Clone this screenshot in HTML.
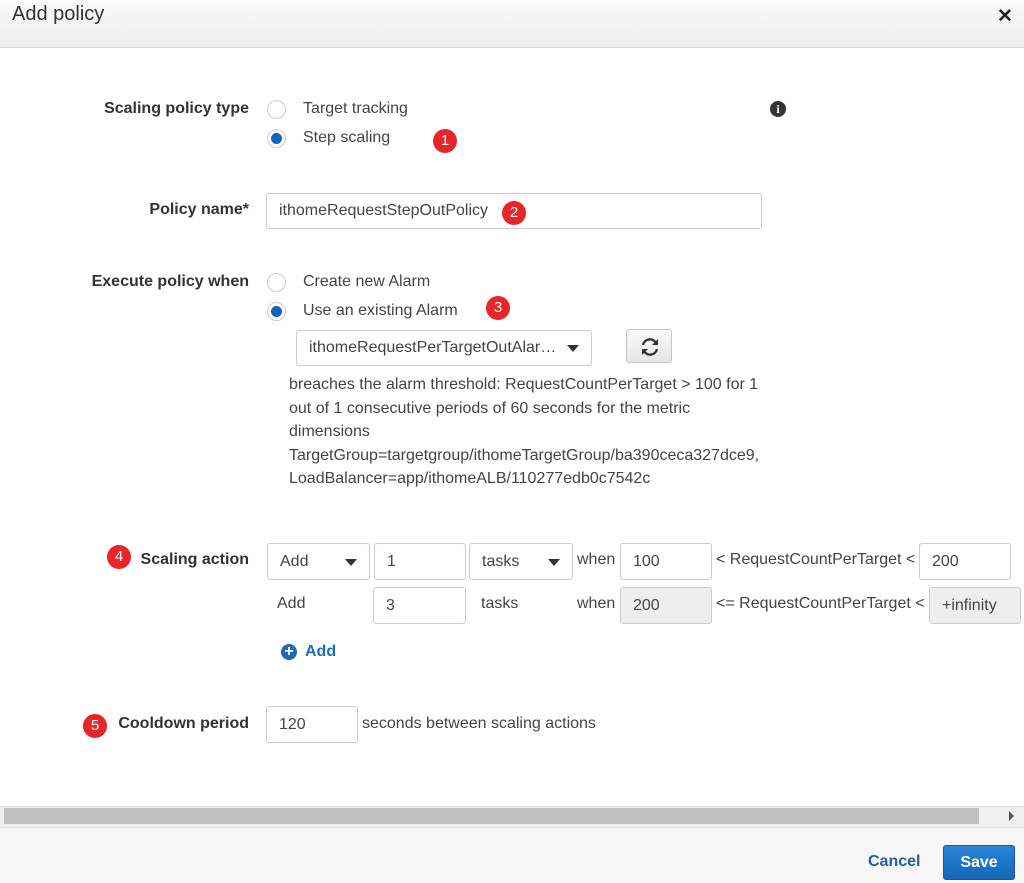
<!DOCTYPE html>
<html><head><meta charset="utf-8"><style>
*{box-sizing:border-box;margin:0;padding:0}
body{width:1024px;height:883px;position:relative;background:#fff;font-family:"Liberation Sans",Arial,sans-serif;color:#444;font-size:16px;overflow:hidden}
.a{position:absolute;white-space:nowrap}
.hdr{position:absolute;left:0;top:0;width:1024px;height:48px;background:linear-gradient(#fafafa,#ededed);border-bottom:1px solid #d6d6d6}
.lbl{position:absolute;right:775px;font-weight:bold;color:#333;font-size:16px;white-space:nowrap}
.rad{position:absolute;width:19px;height:19px;border-radius:50%;border:1px solid #ccc;background:#fff}
.rad.on::after{content:"";position:absolute;left:3px;top:3px;width:11px;height:11px;border-radius:50%;background:#1166bb}
.in{position:absolute;border:1px solid #ccc;border-radius:3px;background:#fff;padding-left:12px;display:flex;align-items:center;font-size:16px;color:#444}
.in.dis{background:#eee}
.car{position:absolute;right:12px;top:50%;margin-top:-3px;width:0;height:0;border-left:6px solid transparent;border-right:6px solid transparent;border-top:7px solid #333}
.b{position:absolute;width:24px;height:24px;border-radius:50%;background:#e8262a;color:#fff;font-size:15px;text-align:center;line-height:24px}
</style></head><body>
<div class="hdr"></div>
<div class="a" style="left:12px;top:3px;font-size:20px;color:#333">Add policy</div>
<div class="a" style="left:997px;top:5px;font-size:19px;font-weight:bold;color:#222">✕</div>

<div class="lbl" style="top:100px">Scaling policy type</div>
<div class="rad" style="left:267px;top:100px"></div>
<div class="a" style="left:303px;top:100px">Target tracking</div>
<div class="rad on" style="left:267px;top:129px"></div>
<div class="a" style="left:303px;top:129px">Step scaling</div>
<div class="b" style="left:433px;top:129px">1</div>
<div class="a" style="left:770px;top:101px;width:16px;height:16px;border-radius:50%;background:#333;color:#fff;font-size:12px;font-weight:bold;text-align:center;line-height:16px;font-family:'Liberation Serif',serif">i</div>

<div class="lbl" style="top:201px">Policy name*</div>
<div class="in" style="left:266px;top:193px;width:496px;height:36px">ithomeRequestStepOutPolicy</div>
<div class="b" style="left:502px;top:201px">2</div>

<div class="lbl" style="top:273px">Execute policy when</div>
<div class="rad" style="left:267px;top:273px"></div>
<div class="a" style="left:303px;top:273px">Create new Alarm</div>
<div class="rad on" style="left:267px;top:302px"></div>
<div class="a" style="left:303px;top:302px">Use an existing Alarm</div>
<div class="b" style="left:486px;top:296px">3</div>
<div class="in" style="left:296px;top:330px;width:296px;height:36px">ithomeRequestPerTargetOutAlar…<span class="car"></span></div>
<div class="a" style="left:626px;top:329px;width:46px;height:34px;border:1px solid #c6c6c6;border-radius:3px;background:linear-gradient(#fafafa,#e6e6e6)">
<svg width="46" height="34" viewBox="0 0 46 34"><g fill="none" stroke="#333" stroke-width="2.4"><path d="M16 15a7 7 0 0 1 13-2"/><path d="M30 19a7 7 0 0 1-13 2"/></g><path d="M31 9v6h-6z M15 25v-6h6z" fill="#333"/></svg></div>
<div class="a" style="left:289px;top:373px;line-height:23.5px;white-space:normal;width:500px">breaches the alarm threshold: RequestCountPerTarget &gt; 100 for 1<br>out of 1 consecutive periods of 60 seconds for the metric<br>dimensions<br>TargetGroup=targetgroup/ithomeTargetGroup/ba390ceca327dce9,<br>LoadBalancer=app/ithomeALB/110277edb0c7542c</div>

<div class="b" style="left:107px;top:545px">4</div>
<div class="lbl" style="top:551px">Scaling action</div>
<div class="in" style="left:267px;top:543px;width:103px;height:37px">Add<span class="car"></span></div>
<div class="in" style="left:374px;top:543px;width:92px;height:37px">1</div>
<div class="in" style="left:469px;top:543px;width:104px;height:37px">tasks<span class="car"></span></div>
<div class="a" style="left:577px;top:551px">when</div>
<div class="in" style="left:620px;top:543px;width:92px;height:37px">100</div>
<div class="a" style="left:716px;top:551px">&lt; RequestCountPerTarget &lt;</div>
<div class="in" style="left:919px;top:543px;width:92px;height:37px">200</div>

<div class="a" style="left:277px;top:595px">Add</div>
<div class="in" style="left:373px;top:587px;width:93px;height:37px">3</div>
<div class="a" style="left:481px;top:595px">tasks</div>
<div class="a" style="left:577px;top:595px">when</div>
<div class="in dis" style="left:620px;top:587px;width:92px;height:37px">200</div>
<div class="a" style="left:716px;top:595px">&lt;= RequestCountPerTarget &lt;</div>
<div class="in dis" style="left:929px;top:587px;width:92px;height:37px">+infinity</div>

<div class="a" style="left:281px;top:644px;width:16px;height:16px;border-radius:50%;background:#1d6ab8;color:#fff;font-weight:bold;font-size:16px;line-height:16px;text-align:center">+</div>
<div class="a" style="left:305px;top:643px;color:#1d6ab8;font-weight:bold;font-size:16px">Add</div>

<div class="b" style="left:83px;top:714px">5</div>
<div class="lbl" style="top:715px">Cooldown period</div>
<div class="in" style="left:266px;top:706px;width:92px;height:37px">120</div>
<div class="a" style="left:362px;top:715px">seconds between scaling actions</div>

<div class="a" style="left:0;top:806px;width:1024px;height:21px;background:#f0f0f0;border-top:1px solid #e0e0e0"></div>
<div class="a" style="left:4px;top:808px;width:975px;height:16px;background:#c1c1c1"></div>
<div class="a" style="left:1009px;top:811px;width:0;height:0;border-top:5px solid transparent;border-bottom:5px solid transparent;border-left:5px solid #555"></div>
<div class="a" style="left:0;top:827px;width:1024px;height:56px;background:#f6f6f6;border-top:1px solid #ddd"></div>
<div class="a" style="left:868px;top:853px;color:#1f5fa8;font-weight:bold;font-size:16px">Cancel</div>
<div class="a" style="left:943px;top:845px;width:72px;height:35px;border-radius:3px;background:linear-gradient(#2a84d6,#1567b8);border:1px solid #135ea8;color:#fff;font-weight:bold;font-size:16px;text-align:center;line-height:33px">Save</div>
</body></html>
